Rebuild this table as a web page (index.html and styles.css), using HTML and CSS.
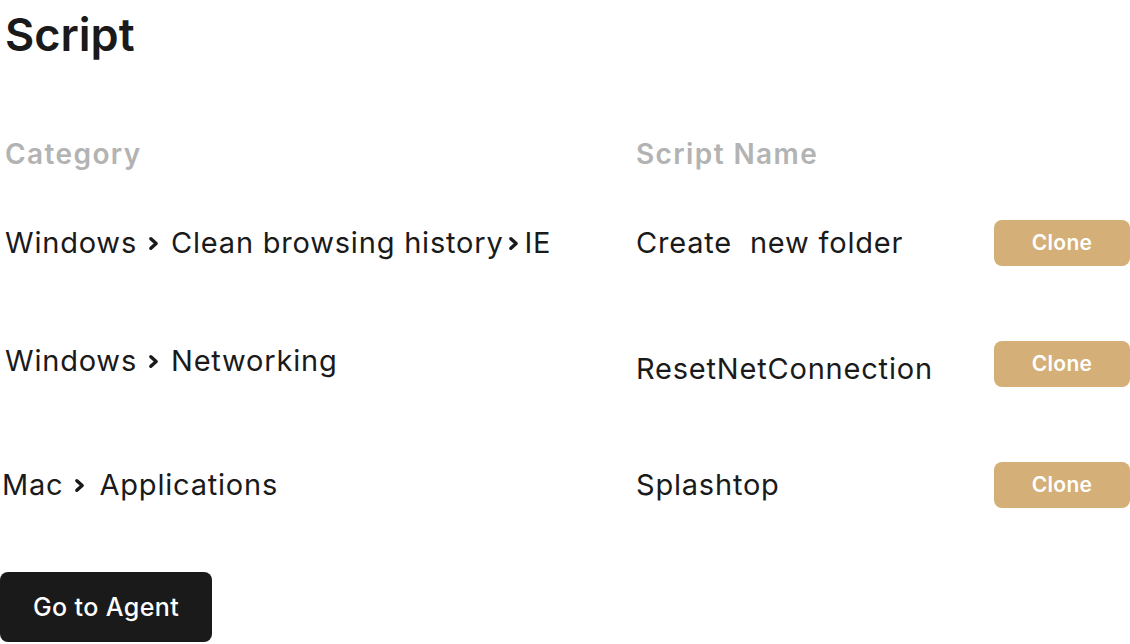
FILE: index.html
```html
<!DOCTYPE html>
<html lang="en">
<head>
<meta charset="utf-8">
<title>Script</title>
<link rel="stylesheet" href="styles.css">
</head>
<body>
<main class="page">
  <h1 class="title">Script</h1>
  <div class="table">
    <div class="th th-cat">Category</div>
    <div class="th th-name">Script Name</div>
    <div class="th"></div>

    <div class="cell cat">Windows<svg class="chev" viewBox="0 0 10 16"><path d="M2.5 3.5 L7.5 8 L2.5 12.5"/></svg>Clean browsing history<svg class="chev tight" viewBox="0 0 10 16"><path d="M2.5 3.5 L7.5 8 L2.5 12.5"/></svg>IE</div>
    <div class="cell name">Create&nbsp; new folder</div>
    <div class="cell act"><button class="clone">Clone</button></div>

    <div class="cell cat up">Windows<svg class="chev" viewBox="0 0 10 16"><path d="M2.5 3.5 L7.5 8 L2.5 12.5"/></svg>Networking</div>
    <div class="cell name down">ResetNetConnection</div>
    <div class="cell act"><button class="clone">Clone</button></div>

    <div class="cell cat mac">Mac<svg class="chev" viewBox="0 0 10 16"><path d="M2.5 3.5 L7.5 8 L2.5 12.5"/></svg>Applications</div>
    <div class="cell name">Splashtop</div>
    <div class="cell act"><button class="clone">Clone</button></div>
  </div>
  <button class="agent">Go to Agent</button>
</main>
</body>
</html>
```
FILE: styles.css
```css
* { box-sizing: border-box; }
html, body { margin: 0; padding: 0; background: #fff; }
body {
  font-family: "Inter", "Liberation Sans", sans-serif;
  color: #1a1a1a;
  width: 1130px;
  height: 644px;
  overflow: hidden;
}
.page { display: flex; flex-direction: column; align-items: flex-start; }
.title {
  margin: 0 0 0 5px;
  height: 70px;
  line-height: 70px;
  font-size: 45px;
  font-weight: 600;
  letter-spacing: 0;
}
.table {
  margin-top: 56px;
  width: 1130px;
  display: grid;
  grid-template-columns: 636px 1fr 136px;
  grid-template-rows: 56px 121px 121px 121px;
  align-items: center;
}
.th {
  font-size: 28px;
  font-weight: 600;
  color: #b3b3b3;
  letter-spacing: 1.4px;
}
.th-cat { padding-left: 5px; }
.cell { font-size: 29px; font-weight: 400; white-space: nowrap; letter-spacing: 0.8px; }
.cat { padding-left: 5px; display: flex; align-items: center; }
.cat.up { padding-bottom: 6px; }
.cat.mac { padding-left: 2px; }
.cat.mac .chev { margin-right: 14px; }
.name.down { padding-top: 9px; }
.chev {
  flex: none;
  width: 11px; height: 17px;
  margin: 1px 12px 0 11px;
  fill: none; stroke: #1a1a1a; stroke-width: 3.2;
  stroke-linecap: round; stroke-linejoin: round;
}
.chev.tight { margin: 1px 6px 0 4px; }
.act { display: flex; justify-content: flex-end; }
.clone {
  width: 136px; height: 46px;
  border: 0; border-radius: 8px;
  background: #d4af77;
  color: #fff;
  font-family: inherit;
  font-size: 21px;
  font-weight: 600;
  letter-spacing: 0.3px;
}
.agent {
  margin-top: 27px;
  width: 212px; height: 70px;
  border: 0; border-radius: 8px;
  background: #1a1a1a;
  color: #fff;
  font-family: inherit;
  font-size: 25px;
  font-weight: 500;
  letter-spacing: 0.4px;
}
```
